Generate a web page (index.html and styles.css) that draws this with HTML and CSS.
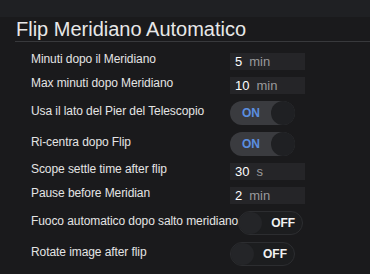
FILE: index.html
```html
<!DOCTYPE html>
<html lang="it">
<head>
    <meta charset="UTF-8">
    <title>Flip Meridiano Automatico</title>
    <link rel="stylesheet" href="styles.css">
</head>
<body>
    <div class="topbar"></div>
    <h2 class="section-title">Flip Meridiano Automatico</h2>

    <div class="settings">
        <div class="row">
            <span class="label">Minuti dopo il Meridiano</span>
            <div class="num"><span class="value">5</span><span class="unit">min</span></div>
        </div>
        <div class="row">
            <span class="label">Max minuti dopo Meridiano</span>
            <div class="num"><span class="value">10</span><span class="unit">min</span></div>
        </div>
        <div class="row">
            <span class="label">Usa il lato del Pier del Telescopio</span>
            <div class="toggle on"><span class="toggle-text">ON</span><span class="knob"></span></div>
        </div>
        <div class="row">
            <span class="label">Ri-centra dopo Flip</span>
            <div class="toggle on"><span class="toggle-text">ON</span><span class="knob"></span></div>
        </div>
        <div class="row">
            <span class="label">Scope settle time after flip</span>
            <div class="num"><span class="value">30</span><span class="unit">s</span></div>
        </div>
        <div class="row">
            <span class="label">Pause before Meridian</span>
            <div class="num"><span class="value">2</span><span class="unit">min</span></div>
        </div>
        <div class="row">
            <span class="label">Fuoco automatico dopo salto meridiano</span>
            <div class="toggle off"><span class="knob"></span><span class="toggle-text">OFF</span></div>
        </div>
        <div class="row">
            <span class="label">Rotate image after flip</span>
            <div class="toggle off"><span class="knob"></span><span class="toggle-text">OFF</span></div>
        </div>
    </div>
</body>
</html>
```

FILE: styles.css
```css
body {
    font-family: 'Liberation Sans', Arial, sans-serif;
    color: #e4e4e4;
    background-color: #1a1a1c;
    margin: 0;
    padding: 0;
}

.topbar {
    height: 17px;
    background-color: #1f2023;
}

.section-title {
    margin: 0 0 0 15px;
    padding-left: 1px;
    height: 24px;
    line-height: 24px;
    font-size: 20px;
    font-weight: normal;
    color: #e8e8e8;
    border-bottom: 1px solid #38393c;
}

.settings {
    padding: 11px 0 0 31px;
}

.row {
    display: flex;
    align-items: center;
    margin-bottom: 7px;
}

.label {
    flex-shrink: 0;
    min-width: 199px;
    font-size: 12px;
    line-height: 14px;
    letter-spacing: -0.08px;
    margin-top: -5px;
}

.num {
    width: 70px;
    height: 17px;
    padding-left: 5px;
    background-color: #252528;
    display: flex;
    align-items: center;
    gap: 7px;
    font-size: 13px;
}

.num .value {
    color: #fff;
}

.num .unit {
    color: #9a9a9c;
}

.toggle {
    box-sizing: border-box;
    width: 65px;
    height: 24px;
    border-radius: 12px;
    display: flex;
    align-items: center;
    font-size: 12px;
    font-weight: bold;
}

.toggle.on {
    background-color: #3a3b3f;
    padding-left: 12px;
    justify-content: space-between;
}

.toggle.on .toggle-text {
    color: #5b8fe0;
}

.toggle.off {
    background-color: #1c1d1f;
    border: 1px solid #2c2d30;
}

.toggle.off .toggle-text {
    color: #f2f2f2;
    margin-left: 9px;
}

.knob {
    width: 24px;
    height: 24px;
    border-radius: 50%;
    background-color: #1f2023;
}

.toggle.off .knob {
    width: 23px;
    height: 22px;
    background-color: #242528;
}
```
